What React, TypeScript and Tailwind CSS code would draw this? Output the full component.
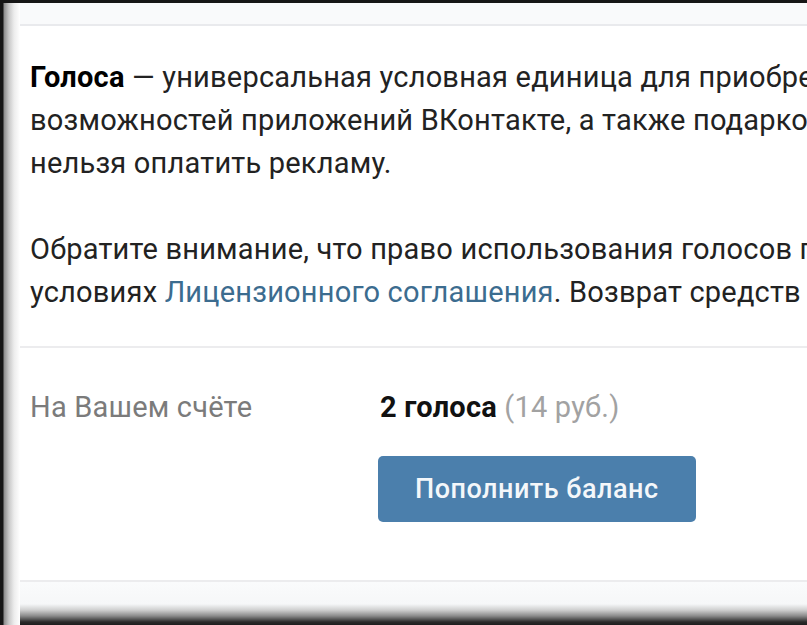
import React from "react";

export default function App() {
  return (
    <div
      className="w-[807px] h-[625px] overflow-hidden bg-[#161616] flex flex-col"
      style={{ fontFamily: "Roboto, 'Open Sans', Arial, sans-serif" }}
    >
      <div className="h-[3px] shrink-0" />
      <div className="flex flex-1 min-h-0">
        <div className="w-[20px] shrink-0 bg-[linear-gradient(to_right,#161616_0px,#161616_3px,#8c8c8c_4px,#c9c9c9_9px,#ececec_14px,#ffffff_20px)]" />
        <div className="flex-1 flex flex-col bg-white min-w-0">
          <div className="h-[23px] shrink-0 bg-[#f9fafb] border-b-2 border-[#e9eaed]" />
          <div className="pl-[10px] pt-[30px] pb-[32px] border-b-2 border-[#ececee] text-[29px] leading-[43px] text-[#222] whitespace-nowrap overflow-hidden tracking-[0.2px]">
            <div>
              <span className="font-bold text-black">Голоса</span> — универсальная условная единица для приобретения
            </div>
            <div>возможностей приложений ВКонтакте, а также подарков и стикеров. Голосами</div>
            <div>нельзя оплатить рекламу.</div>
            <div className="mt-[43px]">Обратите внимание, что право использования голосов предоставляется на</div>
            <div>
              условиях <span className="text-[#3c6c8f]">Лицензионного соглашения</span>. Возврат средств не производится.
            </div>
          </div>
          <div className="flex-1 pl-[10px] pt-[38px] text-[29px] leading-[43px] whitespace-nowrap overflow-hidden tracking-[0.2px]">
            <div className="flex">
              <div className="w-[350px] shrink-0 text-[#7b7b7b]">На Вашем счёте</div>
              <div className="flex flex-col items-start">
                <div>
                  <span className="font-bold text-[#111]">2 голоса</span>{" "}
                  <span className="text-[#a2a2a2]">(14 руб.)</span>
                </div>
                <button className="mt-[27px] -ml-[2px] w-[318px] h-[66px] rounded-[5px] bg-[#4b7fac] text-[#f4f7fa] text-[27px] font-medium text-left pl-[37px] tracking-[0.5px]">
                  Пополнить баланс
                </button>
              </div>
            </div>
          </div>
          <div className="h-[45px] shrink-0 border-t-2 border-[#ececee] bg-[linear-gradient(to_bottom,#fafbfc_0px,#f6f7f8_22px,#cfcfcf_28px,#8a8a8a_34px,#2a2a2a_40px,#161616_45px)]" />
        </div>
      </div>
    </div>
  );
}
